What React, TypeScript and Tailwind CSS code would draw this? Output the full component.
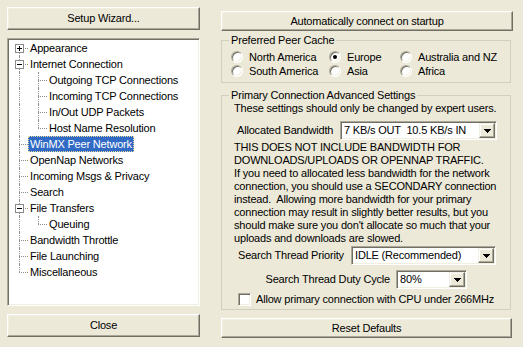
import type { ReactNode } from 'react';

interface TreeItem {
  label: string;
  box?: '+' | '-';
  child?: boolean;
  lastChild?: boolean;
  selected?: boolean;
}

const treeItems: TreeItem[] = [
  { label: 'Appearance', box: '+' },
  { label: 'Internet Connection', box: '-' },
  { label: 'Outgoing TCP Connections', child: true },
  { label: 'Incoming TCP Connections', child: true },
  { label: 'In/Out UDP Packets', child: true },
  { label: 'Host Name Resolution', child: true, lastChild: true },
  { label: 'WinMX Peer Network', selected: true },
  { label: 'OpenNap Networks' },
  { label: 'Incoming Msgs & Privacy' },
  { label: 'Search' },
  { label: 'File Transfers', box: '-' },
  { label: 'Queuing', child: true, lastChild: true },
  { label: 'Bandwidth Throttle' },
  { label: 'File Launching' },
  { label: 'Miscellaneous' },
];

const noticeLines = [
  'THIS DOES NOT INCLUDE BANDWIDTH FOR',
  'DOWNLOADS/UPLOADS OR OPENNAP TRAFFIC.',
  'If you need to allocated less bandwidth for the network',
  'connection, you should use a SECONDARY connection',
  'instead.  Allowing more bandwidth for your primary',
  'connection may result in slightly better results, but you',
  "should make sure you don't allocate so much that your",
  'uploads and downloads are slowed.',
];

function Button({ children, className }: { children: ReactNode; className: string }) {
  return (
    <button
      type="button"
      className={`flex items-center justify-center border border-t-white border-l-white border-b-[#716f64] border-r-[#716f64] bg-[#ece9d8] shadow-[inset_-1px_-1px_0_#aca899,inset_1px_1px_0_#f1efe2] ${className}`}
    >
      {children}
    </button>
  );
}

function ExpandBox({ sign }: { sign: '+' | '-' }) {
  return (
    <svg width="9" height="9" className="absolute left-[6px] top-[4px]">
      <rect x="0.5" y="0.5" width="8" height="8" fill="#fff" stroke="#8a8a8a" />
      <path d="M2 4h5v1H2z" fill="#000" />
      {sign === '+' && <path d="M4 2h1v5H4z" fill="#000" />}
    </svg>
  );
}

function TreeRow({ item, first, last }: { item: TreeItem; first: boolean; last: boolean }) {
  const line = 'absolute border-dotted border-[#8c8c8c]';
  return (
    <div className="flex h-[16px] items-center">
      <div className="relative h-[16px] w-[19px] shrink-0">
        {item.child ? (
          <span className={`${line} left-[10px] top-0 h-[16px] border-l`} />
        ) : (
          <>
            {!first && <span className={`${line} left-[10px] top-0 h-[8px] border-l`} />}
            {!last && <span className={`${line} left-[10px] top-[8px] h-[8px] border-l`} />}
            <span className={`${line} left-[10px] top-[8px] w-[9px] border-t`} />
            {item.box && <ExpandBox sign={item.box} />}
          </>
        )}
      </div>
      {item.child && (
        <div className="relative h-[16px] w-[19px] shrink-0">
          <span className={`${line} left-[10px] top-0 h-[8px] border-l`} />
          {!item.lastChild && <span className={`${line} left-[10px] top-[8px] h-[8px] border-l`} />}
          <span className={`${line} left-[10px] top-[8px] w-[9px] border-t`} />
        </div>
      )}
      <span
        className={`flex h-[16px] items-center whitespace-nowrap px-[2px] ${
          item.selected
            ? 'bg-[#316ac5] text-white outline-1 outline-dotted outline-[#e8d89a] -outline-offset-1'
            : ''
        }`}
      >
        {item.label}
      </span>
    </div>
  );
}

function Radio({ label, checked }: { label: string; checked?: boolean }) {
  return (
    <div className="flex h-[14px] items-center gap-[6px]">
      <span className="flex h-[12px] w-[12px] shrink-0 items-center justify-center rounded-full border border-t-[#aca899] border-l-[#aca899] border-b-white border-r-white bg-white shadow-[inset_1px_1px_0_#716f64,inset_-1px_-1px_0_#f1efe2]">
        {checked && <span className="h-[4px] w-[4px] rounded-full bg-black" />}
      </span>
      <span className="whitespace-nowrap">{label}</span>
    </div>
  );
}

function Combo({ value, className }: { value: string; className: string }) {
  return (
    <div
      className={`flex h-[19px] items-stretch border border-t-[#aca899] border-l-[#aca899] border-b-white border-r-white bg-white shadow-[inset_1px_1px_0_#716f64,inset_-1px_-1px_0_#f1efe2] ${className}`}
    >
      <span className="flex flex-1 items-center whitespace-pre pl-[3px]">{value}</span>
      <span className="my-[1px] mr-[1px] flex w-[16px] items-center justify-center border border-t-[#f1efe2] border-l-[#f1efe2] border-b-[#716f64] border-r-[#716f64] bg-[#ece9d8] shadow-[inset_-1px_-1px_0_#aca899,inset_1px_1px_0_#fff]">
        <svg width="7" height="4">
          <path d="M0 0h7v1H0zM1 1h5v1H1zM2 2h3v1H2zM3 3h1v1H3z" fill="#000" />
        </svg>
      </span>
    </div>
  );
}

export default function App() {
  return (
    <div className="flex h-[347px] w-[523px] overflow-hidden bg-[#ece9d8] pl-[7px] pt-[7px] font-['Liberation_Sans',Arial,sans-serif] text-[11px] leading-[13px] tracking-[-0.18px] text-black">
      <div className="flex w-[193px] flex-col">
        <Button className="h-[23px]">Setup Wizard...</Button>
        <div className="mt-[8px] h-[268px] overflow-hidden border border-t-[#aca899] border-l-[#aca899] border-b-white border-r-white bg-white shadow-[inset_1px_1px_0_#716f64,inset_-1px_-1px_0_#f1efe2] p-[1px]">
          {treeItems.map((item, i) => (
            <TreeRow key={item.label} item={item} first={i === 0} last={i === treeItems.length - 1} />
          ))}
        </div>
        <Button className="mt-[8px] h-[23px]">Close</Button>
      </div>

      <div className="ml-[21px] flex w-[292px] flex-col">
        <Button className="mt-[4px] h-[20px] w-[292px]">Automatically connect on startup</Button>

        <fieldset className="mt-[3px] w-[290px] border border-[#d0d0bf] pb-[4px] pt-[3px]">
          <legend className="ml-[7px] px-[2px] leading-[13px]">Preferred Peer Cache</legend>
          <div className="grid grid-cols-[98px_71px_1fr] pl-[9px]">
            <Radio label="North America" />
            <Radio label="Europe" checked />
            <Radio label="Australia and NZ" />
            <Radio label="South America" />
            <Radio label="Asia" />
            <Radio label="Africa" />
          </div>
        </fieldset>

        <fieldset className="mt-[6px] w-[290px] border border-[#d0d0bf] pb-[3px]">
          <legend className="ml-[7px] px-[2px] leading-[13px]">Primary Connection Advanced Settings</legend>
          <div className="pl-[12px]">These settings should only be changed by expert users.</div>
          <div className="mt-[6px] flex items-center pl-[15px]">
            <span className="w-[103px] whitespace-nowrap">Allocated Bandwidth</span>
            <Combo value="7 KB/s OUT  10.5 KB/s IN" className="w-[157px]" />
          </div>
          <div className="mt-[1px] pl-[12px]">
            {noticeLines.map((l) => (
              <div key={l} className="whitespace-pre">
                {l}
              </div>
            ))}
          </div>
          <div className="mt-[1px] flex items-center pl-[16px]">
            <span className="w-[113px] whitespace-nowrap">Search Thread Priority</span>
            <Combo value="IDLE (Recommended)" className="w-[145px]" />
          </div>
          <div className="mt-[5px] flex items-center pl-[16px]">
            <span className="w-[158px] whitespace-nowrap pr-[6px] text-right">Search Thread Duty Cycle</span>
            <Combo value="80%" className="w-[71px]" />
          </div>
          <div className="mt-[3px] flex h-[14px] items-center gap-[5px] pl-[16px]">
            <span className="h-[13px] w-[13px] shrink-0 border border-t-[#aca899] border-l-[#aca899] border-b-white border-r-white bg-white shadow-[inset_1px_1px_0_#716f64,inset_-1px_-1px_0_#f1efe2]" />
            <span className="whitespace-nowrap">Allow primary connection with CPU under 266MHz</span>
          </div>
        </fieldset>

        <Button className="mt-[8px] h-[20px] w-[291px]">Reset Defaults</Button>
      </div>
    </div>
  );
}
